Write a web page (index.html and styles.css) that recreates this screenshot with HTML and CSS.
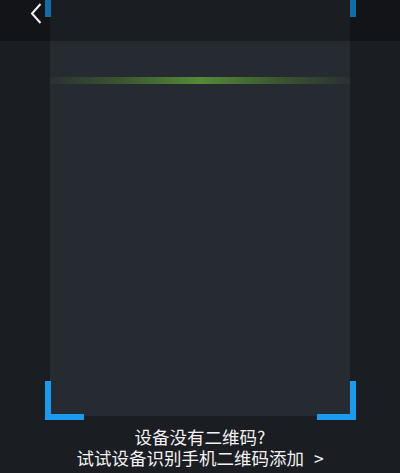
FILE: index.html
```html
<!DOCTYPE html>
<html lang="zh">
<head>
<meta charset="utf-8">
<title>扫码</title>
<link rel="stylesheet" href="styles.css">
</head>
<body>
<div class="page">
  <div class="frame">
    <span class="corner tl"></span>
    <span class="corner tr"></span>
    <span class="corner bl"></span>
    <span class="corner br"></span>
    <div class="scanline"></div>
  </div>
  <div class="tip">
    <div class="tip-line">设备没有二维码?</div>
    <div class="tip-line">试试设备识别手机二维码添加<span class="arrow">&gt;</span></div>
  </div>
</div>
<div class="topbar">
  <svg class="back" width="14" height="22" viewBox="0 0 14 22">
    <path d="M11.5 2 L3 11.5 L11.5 21" fill="none" stroke="#f2f2f2" stroke-width="2"/>
  </svg>
</div>
</body>
</html>
```

FILE: styles.css
```css
html, body {
  margin: 0;
  padding: 0;
}
body {
  width: 400px;
  height: 473px;
  overflow: hidden;
  background: #1a1d21;
  font-family: "Noto Sans CJK SC", "Noto Sans", sans-serif;
  position: relative;
}
.page {
  display: flex;
  flex-direction: column;
  align-items: center;
}
.frame {
  position: relative;
  width: 300px;
  height: 434px;
  margin-top: -18px;
  background: #262b32;
  display: flex;
  flex-direction: column;
}
.scanline {
  margin-top: 95px;
  height: 7px;
  background: linear-gradient(90deg, rgba(80,130,50,0.08) 0%, rgba(80,130,50,0.45) 22%, #558a36 50%, rgba(80,130,50,0.45) 78%, rgba(80,130,50,0.08) 100%);
  border-radius: 2px;
}
.corner {
  position: absolute;
  width: 39px;
  height: 39px;
  box-sizing: border-box;
  border-color: #1b9bf0;
  border-style: solid;
  border-width: 0;
}
.corner.tl { left: -5px; top: -4px; border-left-width: 6px; border-top-width: 6px; }
.corner.tr { right: -6px; top: -4px; border-right-width: 6px; border-top-width: 6px; }
.corner.bl { left: -5px; bottom: -4px; border-left-width: 6px; border-bottom-width: 6px; }
.corner.br { right: -6px; bottom: -4px; border-right-width: 6px; border-bottom-width: 6px; }
.tip {
  margin-top: 10px;
  text-align: center;
  color: #f2f2f2;
  font-size: 17.5px;
  line-height: 21px;
}
.arrow {
  margin-left: 10px;
}
.topbar {
  position: absolute;
  left: 0;
  top: 0;
  width: 400px;
  height: 41px;
  background: rgba(0,0,0,0.3);
}
.back {
  position: absolute;
  left: 29px;
  top: 2px;
}
```
